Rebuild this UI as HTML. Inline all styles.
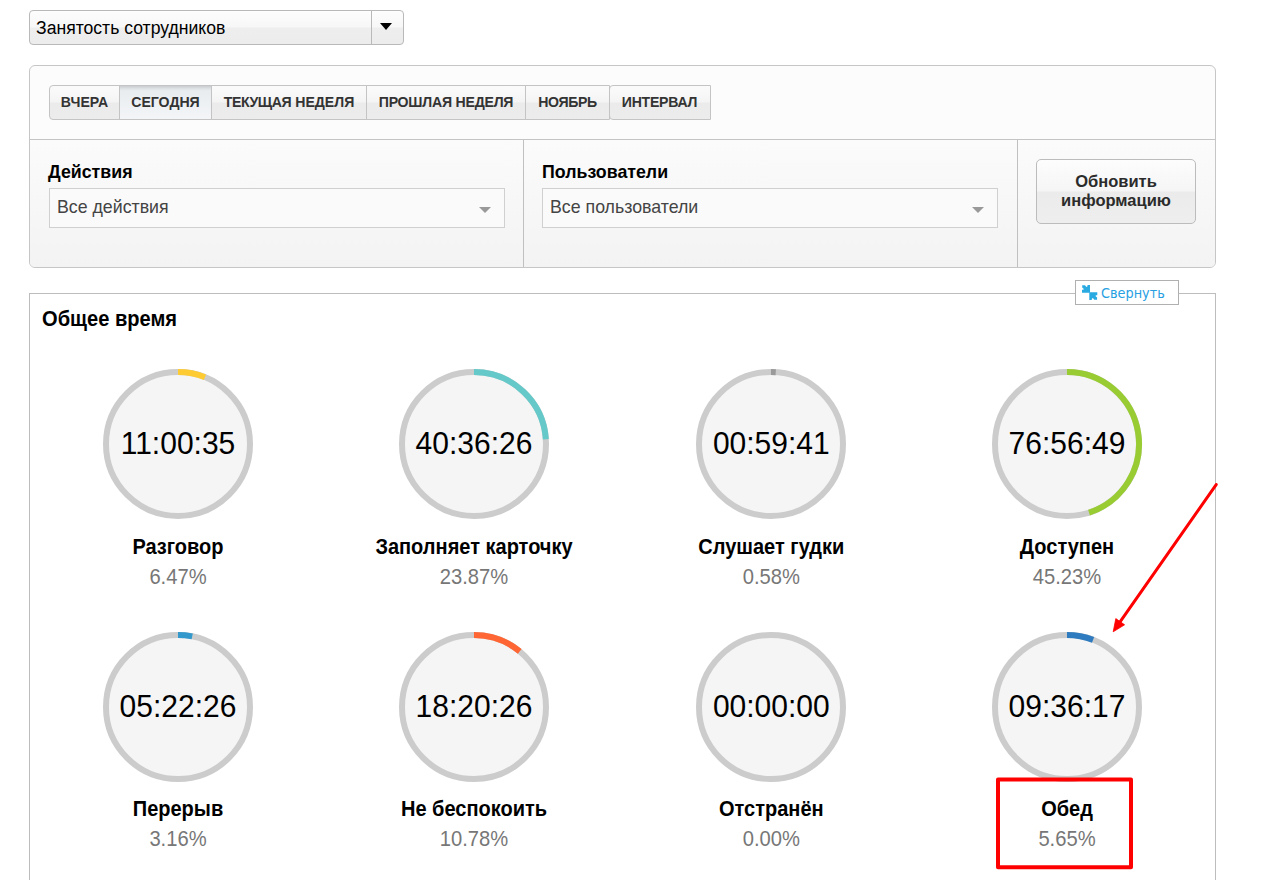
<!DOCTYPE html>
<html lang="ru">
<head>
<meta charset="utf-8">
<title>Занятость сотрудников</title>
<style>
*{box-sizing:border-box;margin:0;padding:0}
html,body{width:1267px;height:880px;overflow:hidden;background:#fff}
body{position:relative;font-family:"Liberation Sans",sans-serif;color:#000}
.abs{position:absolute}
/* top select */
#topsel{left:29px;top:10px;width:375px;height:35px;border:1px solid #b9b9b9;border-radius:4px;
 background:linear-gradient(#fdfdfd 0%,#f7f7f7 48%,#eeeeee 52%,#ececec 100%);}
#topsel .txt{position:absolute;left:6px;top:1px;line-height:33px;font-size:17.6px;color:#000}
#topsel .btn{position:absolute;right:0;top:0;width:32px;height:33px;border-left:1px solid #b9b9b9}
#topsel .btn i{position:absolute;left:8px;top:12px;width:0;height:0;border-left:6px solid transparent;border-right:6px solid transparent;border-top:7px solid #000}
/* filter panel */
#panel{left:29px;top:65px;width:1187px;height:203px;border:1px solid #c6c6c6;border-radius:6px;background:#fcfcfc;overflow:hidden}
#panel .low{position:absolute;left:0;top:73px;width:100%;height:130px;border-top:1px solid #c4c4c4;background:linear-gradient(#fbfbfb,#f3f3f3)}
#panel .v1{position:absolute;left:493px;top:74px;width:1px;height:130px;background:#c0c0c0}
#panel .v2{position:absolute;left:987px;top:74px;width:1px;height:130px;background:#c0c0c0}
#tabs{left:49px;top:85px;height:35px;display:flex;border:1px solid #c4c4c4;border-radius:4px 0 0 4px;overflow:hidden;
 background:linear-gradient(#fbfbfb 0%,#f4f4f4 49%,#ebebeb 51%,#ececec 100%)}
#tabs span{display:block;height:33px;line-height:32px;padding:0;text-align:center;font-size:14.1px;font-weight:bold;color:#333;border-left:1px solid #c4c4c4;white-space:nowrap}
#tabs span:first-child{border-left:0}
#tab6{left:609px;top:85px;width:102px;height:35px;border:1px solid #c4c4c4;border-radius:4px 0 0 4px;line-height:32px;text-align:center;font-size:14.1px;font-weight:bold;color:#333;letter-spacing:-.25px;padding-right:1px;
 background:linear-gradient(#fbfbfb 0%,#f4f4f4 49%,#ebebeb 51%,#ececec 100%)}
#tabs i{font-style:normal;letter-spacing:-.4px}
#tabs span.act{background:linear-gradient(rgba(0,0,0,.13),rgba(0,0,0,.03) 3px,rgba(0,0,0,0) 5px),linear-gradient(#e7ebee 0%,#eceff2 40%,#f3f5f7 100%)}
.lbl{font-size:17.8px;font-weight:bold;line-height:20px;color:#000}
.sel{height:40px;width:456px;border:1px solid #d0d0d0;background:#fafafa;font-size:17.75px;color:#444;line-height:36px;padding-left:7px}
.sel i{position:absolute;right:13px;top:18px;width:0;height:0;border-left:6px solid transparent;border-right:6px solid transparent;border-top:6px solid #999}
#upd{left:1036px;top:159px;width:160px;height:65px;border:1px solid #bcbcbc;border-radius:5px;text-align:center;font-weight:bold;font-size:16.5px;line-height:19px;color:#2b2b2b;padding-top:12px;
 background:linear-gradient(#fdfdfd 0%,#f5f5f5 49%,#ebebeb 51%,#eeeeee 100%)}
/* fieldset */
#fs{left:29px;top:293px;width:1187px;height:620px;border:1px solid #bdbdbd;border-bottom:0}
#collapse{left:1075px;top:280px;width:104px;height:25px;border:1px solid #b0b0b0;background:#fff;font-family:"DejaVu Sans Condensed","DejaVu Sans",sans-serif;font-stretch:condensed;font-size:14.3px;color:#27a0e2;line-height:24px;padding-left:25px}
#ttl{left:42px;top:308px;font-size:20.1px;font-weight:bold;line-height:22px;transform:scaleY(1.07);transform-origin:0 18px}
.g{width:300px;text-align:center}
.g svg{display:block;margin:0 auto}
.g .n{position:absolute;left:0;width:300px;font-size:20px;font-weight:bold;line-height:22px;color:#000;transform:scaleY(1.07);transform-origin:50% 18px}
.g .p{position:absolute;left:0;width:300px;font-size:20.2px;line-height:22px;color:#777;transform:scaleY(1.07);transform-origin:50% 18px}
.g .t{position:absolute;left:0;width:300px;font-size:30px;line-height:34px;color:#000;transform:scaleY(1.055);transform-origin:50% 27.4px}
</style>
</head>
<body>
<div id="topsel" class="abs"><div class="txt">Занятость сотрудников</div><div class="btn"><i></i></div></div>

<div id="panel" class="abs"><div class="low"></div><div class="v1"></div><div class="v2"></div></div>
<div id="tabs" class="abs"><span style="width:69px">ВЧЕРА</span><span class="act" style="width:92px">СЕГОДНЯ</span><span style="width:155px"><i>ТЕКУЩАЯ</i> НЕДЕЛЯ</span><span style="width:159px;letter-spacing:-.22px">ПРОШЛАЯ НЕДЕЛЯ</span><span style="width:84px;letter-spacing:-.35px">НОЯБРЬ</span></div>
<div id="tab6" class="abs">ИНТЕРВАЛ</div>

<div class="abs lbl" style="left:48px;top:162px">Действия</div>
<div class="abs sel" style="left:49px;top:188px">Все действия<i></i></div>
<div class="abs lbl" style="left:542px;top:162px">Пользователи</div>
<div class="abs sel" style="left:542px;top:188px">Все пользователи<i></i></div>
<div id="upd" class="abs">Обновить<br>информацию</div>

<div id="fs" class="abs"></div>
<div id="collapse" class="abs">Свернуть
<svg class="abs" style="left:6px;top:4px" width="16" height="16" viewBox="0 0 16 16"><g fill="#29abe2"><path d="M0.2 0.2 L3 0.2 L4.4 1.9 L5.5 1.2 L5.5 0 L8 0 L8 7.8 L0 7.8 L0 4.8 L1.2 4.8 L1.9 4 L0.2 2.6 Z"/><path transform="translate(15.3 15) rotate(180)" d="M0.2 0.2 L3 0.2 L4.4 1.9 L5.5 1.2 L5.5 0 L8 0 L8 7.8 L0 7.8 L0 4.8 L1.2 4.8 L1.9 4 L0.2 2.6 Z"/></g></svg>
</div>
<div id="ttl" class="abs">Общее время</div>

<!-- gauges inserted here -->
<div id="gauges">
<div class="abs g" style="left:28px;top:363.5px">
<svg width="160" height="160" viewBox="0 0 160 160"><circle cx="80" cy="80" r="72" fill="#f5f5f5" stroke="#cccccc" stroke-width="6"/><path d="M80 8 A72 72 0 0 1 106.93 13.22" fill="none" stroke="#ffcb33" stroke-width="6"/></svg>
<div class="t" style="top:63px">11:00:35</div>
<div class="n" style="top:172px">Разговор</div>
<div class="p" style="top:202px">6.47%</div>
</div>
<div class="abs g" style="left:324px;top:363.5px">
<svg width="160" height="160" viewBox="0 0 160 160"><circle cx="80" cy="80" r="72" fill="#f5f5f5" stroke="#cccccc" stroke-width="6"/><path d="M80 8 A72 72 0 0 1 151.84 75.25" fill="none" stroke="#66c9c9" stroke-width="6"/></svg>
<div class="t" style="top:63px">40:36:26</div>
<div class="n" style="top:172px">Заполняет карточку</div>
<div class="p" style="top:202px">23.87%</div>
</div>
<div class="abs g" style="left:621.3px;top:363.5px">
<svg width="160" height="160" viewBox="0 0 160 160"><circle cx="80" cy="80" r="72" fill="#f5f5f5" stroke="#cccccc" stroke-width="6"/><path d="M80 8 A72 72 0 0 1 84.75 8.16" fill="none" stroke="#9a9a9a" stroke-width="6"/></svg>
<div class="t" style="top:63px">00:59:41</div>
<div class="n" style="top:172px">Слушает гудки</div>
<div class="p" style="top:202px">0.58%</div>
</div>
<div class="abs g" style="left:917px;top:363.5px">
<svg width="160" height="160" viewBox="0 0 160 160"><circle cx="80" cy="80" r="72" fill="#f5f5f5" stroke="#cccccc" stroke-width="6"/><path d="M80 8 A72 72 0 0 1 102.03 148.55" fill="none" stroke="#99cc33" stroke-width="6"/></svg>
<div class="t" style="top:63px">76:56:49</div>
<div class="n" style="top:172px">Доступен</div>
<div class="p" style="top:202px">45.23%</div>
</div>
<div class="abs g" style="left:28px;top:626.5px">
<svg width="160" height="160" viewBox="0 0 160 160"><circle cx="80" cy="80" r="72" fill="#f5f5f5" stroke="#cccccc" stroke-width="6"/><path d="M80 8 A72 72 0 0 1 94.20 9.41" fill="none" stroke="#3399cc" stroke-width="6"/></svg>
<div class="t" style="top:63px">05:22:26</div>
<div class="n" style="top:171px">Перерыв</div>
<div class="p" style="top:201px">3.16%</div>
</div>
<div class="abs g" style="left:324px;top:626.5px">
<svg width="160" height="160" viewBox="0 0 160 160"><circle cx="80" cy="80" r="72" fill="#f5f5f5" stroke="#cccccc" stroke-width="6"/><path d="M80 8 A72 72 0 0 1 125.72 24.38" fill="none" stroke="#ff6633" stroke-width="6"/></svg>
<div class="t" style="top:63px">18:20:26</div>
<div class="n" style="top:171px">Не беспокоить</div>
<div class="p" style="top:201px">10.78%</div>
</div>
<div class="abs g" style="left:621.3px;top:626.5px">
<svg width="160" height="160" viewBox="0 0 160 160"><circle cx="80" cy="80" r="72" fill="#f5f5f5" stroke="#cccccc" stroke-width="6"/></svg>
<div class="t" style="top:63px">00:00:00</div>
<div class="n" style="top:171px">Отстранён</div>
<div class="p" style="top:201px">0.00%</div>
</div>
<div class="abs g" style="left:917px;top:626.5px">
<svg width="160" height="160" viewBox="0 0 160 160"><circle cx="80" cy="80" r="72" fill="#f5f5f5" stroke="#cccccc" stroke-width="6"/><path d="M80 8 A72 72 0 0 1 106.08 12.89" fill="none" stroke="#2f7bbf" stroke-width="6"/></svg>
<div class="t" style="top:63px">09:36:17</div>
<div class="n" style="top:171px">Обед</div>
<div class="p" style="top:201px">5.65%</div>
</div>
</div><!--endg-->

<svg class="abs" style="left:0;top:0" width="1267" height="880" viewBox="0 0 1267 880">
 <line x1="1216.2" y1="484.6" x2="1119" y2="623.3" stroke="#ff0000" stroke-width="3" stroke-linecap="round"/>
 <path d="M1113.2 631.8 L1115.8 618.6 L1124.6 624.8 Z" fill="#ff0000" stroke="#ff0000" stroke-width="0.8" stroke-linejoin="round"/>
 <rect x="998" y="779.6" width="133" height="87.6" fill="none" stroke="#ff0000" stroke-width="4" stroke-linejoin="round"/>
</svg>
</body>
</html>
